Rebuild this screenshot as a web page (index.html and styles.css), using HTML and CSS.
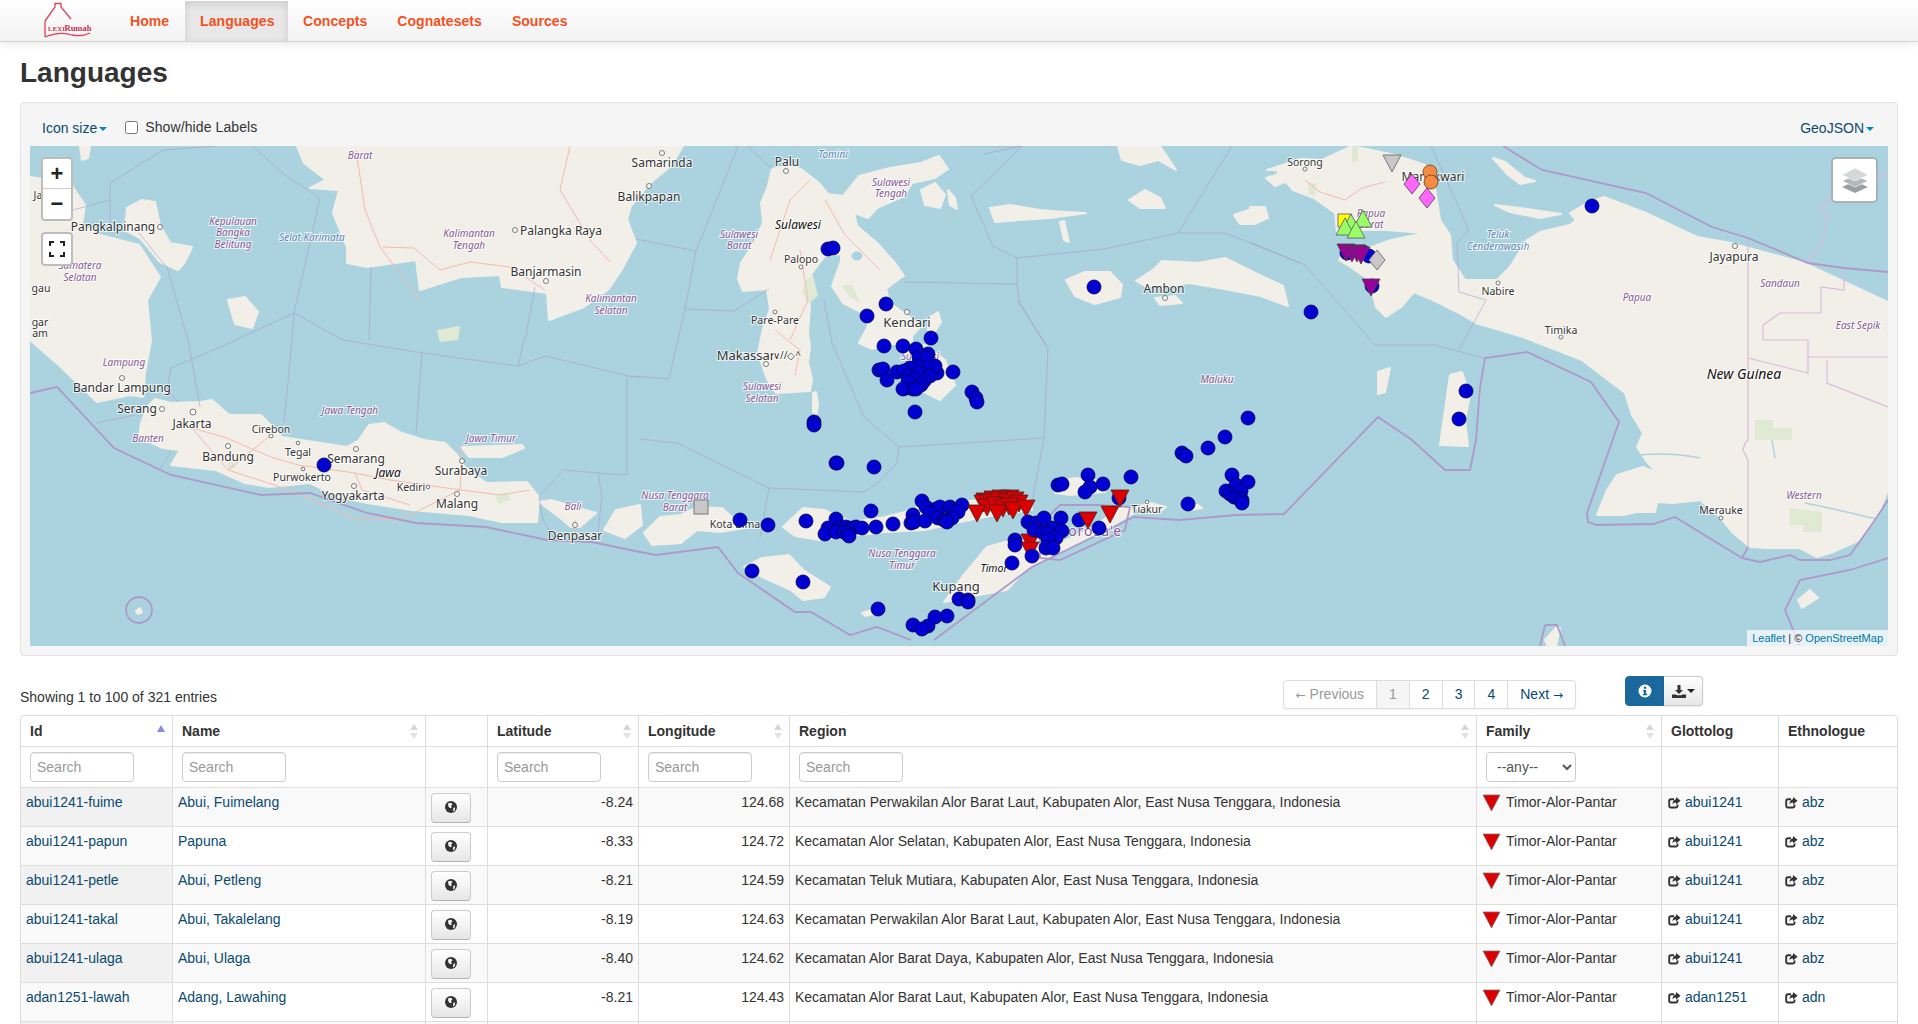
FILE: index.html

```html
<!DOCTYPE html>
<html lang="en">
<head>
  <meta charset="UTF-8" />
  <title>LexiRumah - Languages</title>
  <link rel="stylesheet" href="styles.css">
</head>
<body>
  <svg class="defs" width="0" height="0">
    <defs>
      <polygon id="tri" points="-9,-8 9,-8 0,9" />
      <polygon id="tri-up" points="-9,8 9,8 0,-9" />
      <polygon id="dia" points="0,-10 8,0 0,10 -8,0" />
      <g id="globe">
        <circle cx="6" cy="6" r="6" fill="#333" />
        <path d="M3 2.5 L6 1.8 L7.5 3.2 L6 4.8 L6.8 6.6 L5.2 7.2 L3.4 5.4 Z M8.4 6.8 L10.2 6.6 L9.6 9.4 L8 10.4 Z" fill="#fff" />
      </g>
      <g id="share">
        <path d="M9.5 8.5 V10 Q9.5 11.5 8 11.5 H3 Q1.2 11.5 1.2 9.8 V5 Q1.2 3.2 3 3.2 H6" fill="none" stroke="#333" stroke-width="1.9" />
        <path d="M8 1 L12.6 4.8 L8 8.6 V6.4 Q5.4 6.2 4.4 8.6 Q4.6 3.8 8 3.2 Z" fill="#333" />
      </g>
      <g id="sort">
        <polygon points="4,0 8,6 0,6" fill="#d6d6d6" />
        <polygon points="0,9 8,9 4,15" fill="#e2e2e2" />
      </g>
    </defs>
  </svg>

  <header class="navbar">
    <a class="brand" href="#">
      <svg width="48" height="36" viewBox="44 2 48 36">
        <path class="logo-line" d="M45 37 V21 L55 7 V3.5 H61 V7 L71 19 M45 37 Q60 31 72 35 Q82 37 90 33" />
        <text class="logo-lexi" x="48" y="31">LEXI</text>
        <text class="logo-rumah" x="64.5" y="31">Rumah</text>
      </svg>
    </a>
    <nav class="nav">
      <a href="#">Home</a>
      <a href="#" class="active">Languages</a>
      <a href="#">Concepts</a>
      <a href="#">Cognatesets</a>
      <a href="#">Sources</a>
    </nav>
  </header>

  <main class="content">
    <h2 class="page-title">Languages</h2>

    <section class="well">
      <div class="map-tools">
        <a href="#" class="tool-link">Icon size<span class="caret"></span></a>
        <label class="labels-toggle"><input type="checkbox"> Show/hide Labels</label>
        <a href="#" class="tool-link geojson">GeoJSON<span class="caret"></span></a>
      </div>

      <div class="map">
        <svg class="map-svg" width="1858" height="500" viewBox="30 146 1858 500">
          <!-- land -->
          <g class="land">
            <polygon points="30,177 70,183 85,205 82,225 100,235 139,245 160,277 147,300 151,340 145,373 143,397 130,395 97,402 61,367 30,340" />
            <polygon points="80,146 90,146 88,158 82,160" />
            <polygon points="127,208 142,200 155,202 160,225 170,243 192,247 185,262 178,270 160,262 150,250 140,238 125,230" />
            <polygon points="228,300 245,297 258,312 252,328 235,324" />
            <polygon points="297,146 304,163 326,180 310,188 339,190 333,213 347,247 347,263 367,267 416,260 420,290 461,277 500,275 502,287 547,293 549,320 584,307 609,289 622,269 636,243 627,219 631,206 649,184 671,166 683,146" />
            <polygon points="772,169 767,189 761,203 763,223 754,243 741,263 738,279 743,291 767,289 770,309 763,329 758,353 767,379 776,393 810,391 812,379 808,363 810,346 808,333 810,306 808,286 812,273 825,256 841,254 841,261 832,286 843,303 863,313 868,326 859,343 872,349 890,343 912,349 912,336 921,326 908,316 890,303 886,289 899,279 904,276 895,263 877,243 857,226 854,213 868,218 877,208 904,196 912,183 935,178 948,169 939,156 921,163 890,168 859,176 843,196 828,194 819,183 801,169 788,166" />
            <polygon points="921,190 935,183 945,195 940,208 925,205" />
            <polygon points="948,190 955,198 957,209 950,205" />
            <polygon points="929,318 938,312 941,322 934,333 928,330" />
            <polygon points="905,350 925,345 945,360 955,385 940,400 920,390" />
            <polygon points="813,393 816,392 818,405 816,415 813,412" />
            <polygon points="990,208 1010,205 1040,210 1065,212 1086,213 1050,218 1020,220 995,222" />
            <polygon points="1060,222 1064,221 1068,238 1069,242 1064,240" />
            <polygon points="1118,146 1160,146 1176,170 1158,160 1140,165 1122,160" />
            <polygon points="1129,200 1145,190 1160,198 1165,208 1140,208" />
            <polygon points="1234,215 1255,208 1266,218 1255,224 1240,224" />
            <polygon points="1266,178 1285,172 1290,180 1275,186" />
            <polygon points="1066,280 1085,272 1110,272 1122,285 1120,297 1095,304 1075,296" />
            <polygon points="1162,261 1198,263 1225,258 1247,269 1283,286 1288,306 1261,296 1225,289 1189,283 1167,286 1145,286 1136,281 1154,269" />
            <polygon points="1155,298 1175,296 1182,303 1160,305" />
            <polygon points="1250,207 1265,207 1268,218 1255,223 1250,221" />
            <polygon points="1267,170 1301,159 1322,160 1352,146 1395,155 1425,165 1433,178 1437,200 1440,220 1450,235 1452,260 1465,280 1497,280 1510,267 1527,240 1540,232 1570,225 1576,220 1570,213 1587,203 1604,197 1646,213 1697,237 1731,243 1804,263 1847,283 1888,302 1888,490 1877,517 1860,540 1833,552 1817,557 1800,548 1767,548 1750,547 1733,533 1720,517 1700,500 1673,503 1657,502 1655,512 1637,512 1623,515 1597,515 1607,490 1617,475 1643,467 1657,473 1647,462 1637,447 1643,433 1632,415 1625,393 1582,360 1523,337 1476,323 1459,313 1433,300 1414,292 1401,307 1386,317 1376,307 1369,280 1352,268 1339,260 1342,255 1369,248 1391,240 1425,233 1386,230 1361,230 1337,232 1335,213 1314,198 1293,190 1276,170" />
            <polygon points="1495,205 1520,208 1561,214 1540,218 1510,212" />
            <polygon points="1493,158 1505,162 1525,178 1535,181 1520,184 1508,175" />
            <polygon points="1378,372 1390,368 1385,392 1378,394" />
            <polygon points="1440,445 1450,375 1462,372 1470,395 1465,420 1468,446" />
            <polygon points="141,423 147,407 155,399 171,403 200,402 212,400 229,415 261,415 282,437 314,442 347,447 359,440 369,425 384,423 402,433 424,440 445,443 457,455 465,467 486,483 527,482 539,497 537,522 502,522 469,515 412,510 367,503 339,497 310,483 269,487 245,483 216,470 171,465 180,450 163,448 139,437" />
            <polygon points="461,447 522,445 524,448 502,457 469,457" />
            <polygon points="539,502 551,500 596,513 580,527 571,527 559,517" />
            <polygon points="604,530 616,510 640,505 642,525 625,538" />
            <polygon points="644,533 660,517 681,515 697,507 722,508 735,520 745,528 720,532 697,530 681,543 652,545" />
            <polygon points="783,527 803,508 824,510 852,522 885,517 905,512 925,505 960,502 1000,498 1030,500 1032,510 1000,514 960,522 925,530 885,532 852,536 820,540 795,536" />
            <polygon points="1055,482 1075,478 1110,482 1105,492 1070,495 1055,493" />
            <polygon points="944,602 962,577 987,547 1024,537 1060,543 1089,530 1121,507 1130,507 1134,513 1117,523 1085,540 1048,557 1028,567 1007,590 979,595" />
            <polygon points="1136,507 1150,503 1166,507 1158,513 1140,512" />
            <polygon points="1186,505 1198,505 1202,508 1190,510" />
            <polygon points="744,567 762,558 789,555 803,570 830,587 824,597 803,600 791,590 762,577" />
            <polygon points="862,613 878,608 880,612 866,616" />
            <polygon points="136,611 140,608 142,612 138,614" />
            <polygon points="1545,640 1556,628 1560,628 1556,646 1548,646" />
            <polygon points="1798,600 1810,590 1818,598 1802,608" />
            <polygon points="1800,530 1808,528 1810,536 1802,538" />
          </g>

          <!-- national parks -->
          <g class="park">
            <polygon points="437,330 460,326 458,340 440,342" />
            <polygon points="806,280 813,275 818,296 808,304 802,292" />
            <polygon points="842,285 852,285 860,302 850,298" />
            <polygon points="1352,146 1358,146 1358,162 1352,162" />
            <polygon points="1308,182 1316,184 1315,196 1308,194" />
            <polygon points="1755,420 1773,420 1773,428 1792,428 1792,440 1755,440" />
            <polygon points="1790,508 1822,512 1822,532 1803,532 1803,525 1790,525" />
            <polygon points="227,462 233,460 236,468 229,469" />
            <polygon points="495,495 508,492 510,500 498,504" />
          </g>

          <!-- rivers and lakes -->
          <g class="water">
            <ellipse cx="857" cy="256" rx="5" ry="4" />
            <ellipse cx="820" cy="330" rx="2" ry="6" />
            <path d="M1640 455 Q1670 452 1700 458 M1805 503 Q1840 510 1880 520 M1772 440 L1775 458" />
          </g>

          <!-- roads and boundaries -->
          <g class="roads">
            <path d="M192 428 L224 437 L271 457 L298 465 L355 473 L362 490 L410 505 M192 428 L228 470 L290 490 L353 518 L400 520 L460 490 L461 470 M355 473 L390 480 L461 490 L500 495 L530 490 M228 470 L271 435 M461 470 L461 445 M575 520 L575 535" />
            <path d="M356 150 L365 210 L380 247 L420 300 M383 247 L414 248 L440 270 L470 262 L510 267 L545 290 M570 146 L560 190 L590 240 L610 262 M770 260 L790 200 L810 180 M800 250 L808 300 L790 340 M825 200 L845 235 L880 270 M775 330 L800 350 L795 375" />
            <path d="M1305 180 L1320 192 L1345 200 L1362 188 L1385 182" />
          </g>
          <g class="bd-thin">
            <path d="M253 146 L282 173 L320 198 L294 313 L343 340 M163 150 L216 146 M163 150 L110 183 L110 227 M110 200 L73 210 M294 313 L235 340 M294 313 L292 340 M188 340 L167 267 L163 263 L139 233 M371 267 L369 340 M535 287 L525 340" />
            <path d="M343 340 L422 353 L518 366 L545 356 L633 377 L640 377 M422 353 L416 433 M518 366 L524 340 M237 340 L171 368 L167 390 L178 402 M188 340 L200 407 M292 340 L284 423 M171 452 L159 470 M96 423 L135 415 M627 377 L627 475 L598 473 L563 470 L539 497 L543 520 L555 540 M598 473 L602 497 L598 532" />
            <path d="M640 439 L677 443 L769 488 L864 492 L879 482 L897 463 L899 447 L864 417 L832 343 L824 300 M899 447 L1044 438 L1048 347 L1017 300 M769 488 L760 538 M1044 438 L1030 513" />
            <path d="M738 146 L696 251 L685 309 L669 379 L633 376 M772 169 L747 146 M696 251 L636 239 M685 309 L734 311 L769 289 M904 282 L1017 284 L1017 258 L993 246 L971 196 L1022 146 M984 154 L1022 146 L960 146 M1232 146 L1178 233 L1225 233 L1300 263 M1017 258 L1104 249 L1178 233 M1017 284 L1020 303 L1046 346" />
            <path d="M1431 146 L1469 230 L1457 243 M1250 242 L1305 265 L1375 345 L1435 345 L1484 358 M1459 350 L1486 300 L1459 292 L1457 243" />
          </g>
          <g class="bd-png">
            <path d="M1808 263 L1823 240 L1827 217 L1821 207 L1830 198 L1888 173" />
            <path d="M1844 268 L1844 290 L1821 287 L1821 313 L1780 313 L1763 325 L1763 340 L1808 340 L1808 373 L1748 358 M1808 357 L1888 357 M1827 360 L1827 383 L1888 407" />
            <path d="M1748 238 L1748 440 L1745 443 L1743 450 L1748 460 L1748 547" />
          </g>
          <g class="bd-thick">
            <path d="M30 393 L57 387 L114 448 L171 475 L261 495 L310 493 L367 513 L416 523 L486 527 L547 540 L592 542 L640 552 L656 555 L718 547 L738 573 L795 612 L811 612 L850 635 L877 627 L911 640" />
            <path d="M934 640 L1032 567 L1134 517 L1179 520 L1236 515 L1284 514 L1378 417 L1412 440 L1445 470 L1470 470 L1476 440 L1480 387 L1485 358 L1527 352 L1591 382 L1619 422 L1587 513 L1588 522 L1597 525 L1653 524 L1675 517 L1742 558 L1748 547" />
            <path d="M1503 146 L1542 170 L1646 193 L1712 227 L1748 238 L1808 263 L1844 268 L1888 272" />
            <path d="M1742 558 L1760 562 L1790 555 L1800 560 L1830 560 L1850 555 L1875 520 L1888 500" />
            <path d="M1800 646 L1785 610 L1800 580 L1850 570 L1888 558 M1545 625 L1557 625 L1565 646 M1540 646 L1545 625" />
            <ellipse cx="139" cy="610" rx="13" ry="13" />
            <path d="M1040 525 L1060 505 L1100 505 L1130 507 L1125 530 L1060 560 L1040 558 Z" />
          </g>

          <!-- city dots -->
          <g class="city-dot">
            <circle cx="160" cy="227" r="2.5" /><circle cx="515" cy="230" r="2.5" /><circle cx="546" cy="281" r="2.5" />
            <circle cx="662" cy="153" r="2.5" /><circle cx="649" cy="186" r="2.5" /><circle cx="786" cy="171" r="2.5" />
            <circle cx="801" cy="267" r="2" /><circle cx="775" cy="312" r="2" /><circle cx="907" cy="312" r="2.5" />
            <circle cx="766" cy="364" r="2.5" /><circle cx="1165" cy="298" r="2.5" /><circle cx="1305" cy="169" r="2" />
            <circle cx="1498" cy="283" r="2" /><circle cx="1735" cy="246" r="2.5" /><circle cx="1561" cy="337" r="2" />
            <circle cx="1721" cy="518" r="2" /><circle cx="122" cy="378" r="2.5" /><circle cx="162" cy="409" r="2.5" />
            <circle cx="193" cy="412" r="3" /><circle cx="228" cy="446" r="2.5" /><circle cx="271" cy="436" r="2" />
            <circle cx="298" cy="443" r="1.8" /><circle cx="356" cy="449" r="2.5" /><circle cx="303" cy="469" r="1.8" />
            <circle cx="354" cy="486" r="2.5" /><circle cx="428" cy="487" r="1.8" /><circle cx="462" cy="461" r="2.5" />
            <circle cx="457" cy="494" r="2.5" /><circle cx="575" cy="525" r="2.5" /><circle cx="1147" cy="502" r="1.8" />
          </g>

          <!-- place names -->
          <g class="city">
            <text x="113" y="231">Pangkalpinang</text><text x="561" y="235">Palangka Raya</text><text x="546" y="276">Banjarmasin</text>
            <text x="662" y="167">Samarinda</text><text x="649" y="201">Balikpapan</text><text x="787" y="166">Palu</text>
            <text x="746" y="360" class="big">Makassar</text><text x="907" y="327" class="big">Kendari</text>
            <text x="122" y="392">Bandar Lampung</text><text x="137" y="413">Serang</text><text x="192" y="428">Jakarta</text>
            <text x="228" y="461">Bandung</text><text x="356" y="463">Semarang</text><text x="461" y="475">Surabaya</text>
            <text x="353" y="500">Yogyakarta</text><text x="457" y="508">Malang</text><text x="575" y="540">Denpasar</text>
            <text x="1164" y="293">Ambon</text><text x="1734" y="261">Jayapura</text><text x="956" y="591" class="big">Kupang</text>
            <text x="1433" y="181">Manokwari</text>
            <text x="271" y="433" class="small">Cirebon</text><text x="298" y="456" class="small">Tegal</text><text x="302" y="481" class="small">Purwokerto</text>
            <text x="411" y="491" class="small">Kediri</text><text x="801" y="263" class="small">Palopo</text><text x="775" y="324" class="small">Pare-Pare</text>
            <text x="1305" y="166" class="small">Sorong</text><text x="1498" y="295" class="small">Nabire</text><text x="1561" y="334" class="small">Timika</text>
            <text x="1721" y="514" class="small">Merauke</text><text x="1147" y="513" class="small">Tiakur</text><text x="735" y="528" class="small">Kota Bima</text>
            <text x="38" y="199" class="small">Ja</text><text x="41" y="292" class="small">gau</text>
            <text x="40" y="326" class="small">gar</text><text x="40" y="337" class="small">am</text>
            <text x="787" y="359" class="script">∨//◇^</text>
          </g>
          <g class="state">
            <text x="360" y="159">Barat</text><text x="233" y="225">Kepulauan</text><text x="233" y="236">Bangka</text><text x="233" y="248">Belitung</text>
            <text x="469" y="237">Kalimantan</text><text x="469" y="249">Tengah</text><text x="80" y="269">Sumatera</text><text x="80" y="281">Selatan</text>
            <text x="611" y="302">Kalimantan</text><text x="611" y="314">Selatan</text><text x="124" y="366">Lampung</text><text x="148" y="442">Banten</text>
            <text x="350" y="414">Jawa Tengah</text><text x="491" y="442">Jawa Timur</text><text x="573" y="510">Bali</text>
            <text x="891" y="186">Sulawesi</text><text x="891" y="197">Tengah</text><text x="739" y="238">Sulawesi</text><text x="739" y="249">Barat</text>
            <text x="762" y="390">Sulawesi</text><text x="762" y="402">Selatan</text><text x="920" y="360">Sulawesi</text>
            <text x="1217" y="383">Maluku</text><text x="1371" y="217">Papua</text><text x="1371" y="228">Barat</text>
            <text x="675" y="499">Nusa Tenggara</text><text x="675" y="511">Barat</text><text x="902" y="557">Nusa Tenggara</text><text x="902" y="569">Timur</text>
            <text x="1780" y="287">Sandaun</text><text x="1637" y="301">Papua</text><text x="1858" y="329">East Sepik</text><text x="1804" y="499">Western</text>
            <text x="1091" y="536" class="country">Lorosa'e</text>
          </g>
          <g class="sea">
            <text x="312" y="241">Selat Karimata</text><text x="833" y="158">Tomini</text>
            <text x="1498" y="238">Teluk</text><text x="1498" y="250">Cenderawasih</text>
          </g>
          <g class="island">
            <text x="798" y="229">Sulawesi</text><text x="388" y="477">Jawa</text><text x="994" y="572" class="small">Timor</text>
            <text x="1744" y="379" class="big">New Guinea</text>
          </g>

          <!-- language markers -->
          <g class="m-blue">
            <circle cx="828" cy="249" /><circle cx="833" cy="248" /><circle cx="886" cy="304" /><circle cx="867" cy="316" />
            <circle cx="931" cy="338" /><circle cx="884" cy="346" /><circle cx="903" cy="346" /><circle cx="916" cy="349" />
            <circle cx="928" cy="354" /><circle cx="919" cy="357" /><circle cx="927" cy="358" /><circle cx="879" cy="370" />
            <circle cx="883" cy="369" /><circle cx="897" cy="372" /><circle cx="887" cy="380" /><circle cx="953" cy="372" />
            <circle cx="937" cy="373" /><circle cx="935" cy="366" /><circle cx="926" cy="368" /><circle cx="917" cy="366" />
            <circle cx="910" cy="368" /><circle cx="904" cy="371" /><circle cx="908" cy="376" /><circle cx="919" cy="373" />
            <circle cx="930" cy="376" /><circle cx="924" cy="381" /><circle cx="915" cy="379" /><circle cx="906" cy="388" />
            <circle cx="921" cy="385" /><circle cx="908" cy="382" /><circle cx="903" cy="389" /><circle cx="913" cy="389" />
            <circle cx="916" cy="389" /><circle cx="972" cy="392" /><circle cx="976" cy="398" /><circle cx="977" cy="402" />
            <circle cx="1094" cy="287" /><circle cx="915" cy="412" /><circle cx="814" cy="422" /><circle cx="814" cy="425" />
            <circle cx="836" cy="463" /><circle cx="837" cy="463" /><circle cx="874" cy="467" /><circle cx="740" cy="520" />
            <circle cx="768" cy="525" /><circle cx="806" cy="521" /><circle cx="871" cy="511" /><circle cx="836" cy="519" />
            <circle cx="828" cy="528" /><circle cx="825" cy="534" /><circle cx="840" cy="527" /><circle cx="836" cy="532" />
            <circle cx="846" cy="527" /><circle cx="852" cy="528" /><circle cx="856" cy="527" /><circle cx="862" cy="528" />
            <circle cx="844" cy="532" /><circle cx="848" cy="533" /><circle cx="849" cy="536" /><circle cx="876" cy="527" />
            <circle cx="893" cy="524" /><circle cx="922" cy="501" /><circle cx="926" cy="507" /><circle cx="936" cy="509" />
            <circle cx="940" cy="507" /><circle cx="950" cy="507" /><circle cx="954" cy="510" /><circle cx="962" cy="505" />
            <circle cx="958" cy="512" /><circle cx="930" cy="513" /><circle cx="913" cy="515" /><circle cx="911" cy="523" />
            <circle cx="914" cy="522" /><circle cx="925" cy="521" /><circle cx="938" cy="518" /><circle cx="944" cy="520" />
            <circle cx="952" cy="518" /><circle cx="946" cy="520" /><circle cx="947" cy="522" />
            <circle cx="1058" cy="485" /><circle cx="1062" cy="484" /><circle cx="1088" cy="475" /><circle cx="1090" cy="487" />
            <circle cx="1103" cy="484" /><circle cx="1085" cy="492" /><circle cx="1131" cy="477" /><circle cx="1119" cy="498" />
            <circle cx="1079" cy="520" /><circle cx="1188" cy="504" /><circle cx="1182" cy="453" /><circle cx="1186" cy="456" />
            <circle cx="1208" cy="448" /><circle cx="1225" cy="437" /><circle cx="1248" cy="418" /><circle cx="1232" cy="475" />
            <circle cx="1248" cy="482" /><circle cx="1236" cy="485" /><circle cx="1241" cy="491" /><circle cx="1226" cy="491" />
            <circle cx="1230" cy="494" /><circle cx="1234" cy="497" /><circle cx="1238" cy="498" /><circle cx="1242" cy="500" />
            <circle cx="1242" cy="503" /><circle cx="752" cy="571" /><circle cx="803" cy="582" /><circle cx="878" cy="609" />
            <circle cx="959" cy="599" /><circle cx="968" cy="600" /><circle cx="968" cy="602" /><circle cx="947" cy="616" />
            <circle cx="935" cy="617" /><circle cx="928" cy="626" /><circle cx="913" cy="625" /><circle cx="922" cy="629" />
            <circle cx="324" cy="465" /><circle cx="1592" cy="206" /><circle cx="1311" cy="312" /><circle cx="1466" cy="391" />
            <circle cx="1459" cy="419" /><circle cx="1347" cy="253" /><circle cx="1363" cy="252" /><circle cx="1369" cy="256" />
            <circle cx="1372" cy="286" />
          </g>
          <g class="m-red">
            <use href="#tri" x="985" y="501" /><use href="#tri" x="993" y="499" /><use href="#tri" x="1001" y="498" />
            <use href="#tri" x="1010" y="498" /><use href="#tri" x="1004" y="501" /><use href="#tri" x="996" y="503" />
            <use href="#tri" x="983" y="503" /><use href="#tri" x="991" y="502" /><use href="#tri" x="999" y="500" />
            <use href="#tri" x="1007" y="502" /><use href="#tri" x="1015" y="500" /><use href="#tri" x="1019" y="503" />
            <use href="#tri" x="987" y="507" /><use href="#tri" x="995" y="505" /><use href="#tri" x="1003" y="508" />
            <use href="#tri" x="1009" y="506" /><use href="#tri" x="977" y="513" /><use href="#tri" x="997" y="513" />
            <use href="#tri" x="1013" y="510" /><use href="#tri" x="1026" y="508" /><use href="#tri" x="1120" y="498" />
            <use href="#tri" x="1110" y="514" /><use href="#tri" x="1088" y="520" /><use href="#tri" x="1030" y="542" />
            <use href="#tri" x="1030" y="550" />
          </g>
          <g class="m-blue">
            <circle cx="1028" cy="522" /><circle cx="1036" cy="523" /><circle cx="1044" cy="518" /><circle cx="1052" cy="528" />
            <circle cx="1062" cy="531" /><circle cx="1061" cy="518" /><circle cx="1034" cy="530" /><circle cx="1042" cy="532" />
            <circle cx="1048" cy="533" /><circle cx="1056" cy="538" /><circle cx="1048" cy="540" /><circle cx="1046" cy="548" />
            <circle cx="1053" cy="548" /><circle cx="1015" cy="540" /><circle cx="1015" cy="545" /><circle cx="1032" cy="556" />
            <circle cx="1012" cy="563" /><circle cx="1099" cy="528" />
          </g>
          <g class="m-purple">
            <use href="#tri" x="1346" y="252" /><use href="#tri" x="1352" y="253" /><use href="#tri" x="1357" y="253" />
            <use href="#tri" x="1361" y="255" /><use href="#tri" x="1371" y="287" />
          </g>
          <rect class="m-grey" x="694" y="500" width="14" height="14" />
          <use class="m-grey" href="#tri" x="1392" y="163" />
          <use class="m-grey" href="#dia" x="1377" y="260" />
          <g class="m-orange"><circle cx="1430" cy="172" /><circle cx="1431" cy="182" /></g>
          <g class="m-pink"><use href="#dia" x="1412" y="184" /><use href="#dia" x="1427" y="198" /></g>
          <rect class="m-yellow" x="1338" y="214" width="13" height="13" />
          <g class="m-green">
            <use href="#tri-up" x="1363" y="219" /><use href="#tri-up" x="1351" y="223" />
            <use href="#tri-up" x="1345" y="227" /><use href="#tri-up" x="1356" y="230" />
          </g>
        </svg>

        <div class="leaflet-bar zoom-ctl">
          <a href="#" class="zoom-in">+</a>
          <a href="#">&minus;</a>
        </div>
        <div class="leaflet-bar fs-ctl">
          <a href="#">
            <svg width="16" height="16" viewBox="0 0 16 16"><path d="M1 5 V1 H5 M11 1 H15 V5 M15 11 V15 H11 M5 15 H1 V11" fill="none" stroke="#222" stroke-width="2" /></svg>
          </a>
        </div>
        <div class="layers-ctl">
          <svg width="26" height="26" viewBox="0 0 26 26">
            <polygon points="13,14 26,20 13,26 0,20" fill="#9aa0a0" />
            <polygon points="13,8 26,14 13,20 0,14" fill="#b4b8b8" stroke="#fff" stroke-width=".6" />
            <polygon points="13,1 26,8 13,14 0,8" fill="#d5d8d8" stroke="#fff" stroke-width=".6" />
          </svg>
        </div>
        <div class="attribution"><a href="#">Leaflet</a> | &copy; <a href="#">OpenStreetMap</a></div>
      </div>
    </section>

    <div class="table-top">
      <div class="table-info">Showing 1 to 100 of 321 entries</div>
      <ul class="pager">
        <li class="off"><a href="#"><span class="arr">&larr;</span> Previous</a></li>
        <li class="current"><a href="#">1</a></li>
        <li><a href="#">2</a></li>
        <li><a href="#">3</a></li>
        <li><a href="#">4</a></li>
        <li><a href="#">Next <span class="arr">&rarr;</span></a></li>
      </ul>
      <div class="btn-group">
        <button class="btn-info" type="button">
          <svg width="14" height="14" viewBox="0 0 14 14"><circle cx="7" cy="7" r="6.5" fill="#fff" /><rect x="5.8" y="2.6" width="2.4" height="2.2" fill="#1a689c" /><path d="M4.9 6 H8.1 V9.8 H9.2 V11.2 H4.9 V9.8 H6 V7.4 H4.9 Z" fill="#1a689c" /></svg>
        </button>
        <button class="btn-dl" type="button">
          <svg width="14" height="13" viewBox="0 0 14 13"><path d="M5.5 0 H8.5 V5 H11 L7 9 L3 5 H5.5 Z M0 9.5 H3.4 L5.2 10.2 H8.8 L10.6 9.5 H14 V13 H0 Z" fill="#333" /></svg>
          <span class="caret dark"></span>
        </button>
      </div>
    </div>

    <table class="data-table">
      <colgroup>
        <col class="c-id"><col class="c-name"><col class="c-map"><col class="c-lat"><col class="c-lon">
        <col class="c-region"><col class="c-family"><col class="c-glotto"><col class="c-ethno">
      </colgroup>
      <thead>
        <tr class="head-row">
          <th><div class="th-in">Id<span class="sort-up"></span></div></th>
          <th><div class="th-in">Name<svg class="sort" width="8" height="15"><use href="#sort" /></svg></div></th>
          <th></th>
          <th><div class="th-in">Latitude<svg class="sort" width="8" height="15"><use href="#sort" /></svg></div></th>
          <th><div class="th-in">Longitude<svg class="sort" width="8" height="15"><use href="#sort" /></svg></div></th>
          <th><div class="th-in">Region<svg class="sort" width="8" height="15"><use href="#sort" /></svg></div></th>
          <th><div class="th-in">Family<svg class="sort" width="8" height="15"><use href="#sort" /></svg></div></th>
          <th><div class="th-in">Glottolog</div></th>
          <th><div class="th-in">Ethnologue</div></th>
        </tr>
        <tr class="filter-row">
          <th><input type="text" placeholder="Search"></th>
          <th><input type="text" placeholder="Search"></th>
          <th></th>
          <th><input type="text" placeholder="Search"></th>
          <th><input type="text" placeholder="Search"></th>
          <th><input type="text" placeholder="Search"></th>
          <th><select><option>--any--</option></select></th>
          <th></th>
          <th></th>
        </tr>
      </thead>
      <tbody>
        <tr>
          <td class="sorted"><a href="#">abui1241-fuime</a></td><td><a href="#">Abui, Fuimelang</a></td>
          <td><button class="btn-globe" type="button"><svg width="12" height="12"><use href="#globe" /></svg></button></td>
          <td class="num">-8.24</td><td class="num">124.68</td>
          <td>Kecamatan Perwakilan Alor Barat Laut, Kabupaten Alor, East Nusa Tenggara, Indonesia</td>
          <td><div class="fam"><svg width="19" height="18" viewBox="0 0 19 18"><polygon class="fam-tri" points="1,1 18,1 9.5,17" /></svg>Timor-Alor-Pantar</div></td>
          <td><svg class="ext" width="13" height="13"><use href="#share" /></svg><a href="#">abui1241</a></td>
          <td><svg class="ext" width="13" height="13"><use href="#share" /></svg><a href="#">abz</a></td>
        </tr>
        <tr>
          <td class="sorted"><a href="#">abui1241-papun</a></td><td><a href="#">Papuna</a></td>
          <td><button class="btn-globe" type="button"><svg width="12" height="12"><use href="#globe" /></svg></button></td>
          <td class="num">-8.33</td><td class="num">124.72</td>
          <td>Kecamatan Alor Selatan, Kabupaten Alor, East Nusa Tenggara, Indonesia</td>
          <td><div class="fam"><svg width="19" height="18" viewBox="0 0 19 18"><polygon class="fam-tri" points="1,1 18,1 9.5,17" /></svg>Timor-Alor-Pantar</div></td>
          <td><svg class="ext" width="13" height="13"><use href="#share" /></svg><a href="#">abui1241</a></td>
          <td><svg class="ext" width="13" height="13"><use href="#share" /></svg><a href="#">abz</a></td>
        </tr>
        <tr>
          <td class="sorted"><a href="#">abui1241-petle</a></td><td><a href="#">Abui, Petleng</a></td>
          <td><button class="btn-globe" type="button"><svg width="12" height="12"><use href="#globe" /></svg></button></td>
          <td class="num">-8.21</td><td class="num">124.59</td>
          <td>Kecamatan Teluk Mutiara, Kabupaten Alor, East Nusa Tenggara, Indonesia</td>
          <td><div class="fam"><svg width="19" height="18" viewBox="0 0 19 18"><polygon class="fam-tri" points="1,1 18,1 9.5,17" /></svg>Timor-Alor-Pantar</div></td>
          <td><svg class="ext" width="13" height="13"><use href="#share" /></svg><a href="#">abui1241</a></td>
          <td><svg class="ext" width="13" height="13"><use href="#share" /></svg><a href="#">abz</a></td>
        </tr>
        <tr>
          <td class="sorted"><a href="#">abui1241-takal</a></td><td><a href="#">Abui, Takalelang</a></td>
          <td><button class="btn-globe" type="button"><svg width="12" height="12"><use href="#globe" /></svg></button></td>
          <td class="num">-8.19</td><td class="num">124.63</td>
          <td>Kecamatan Perwakilan Alor Barat Laut, Kabupaten Alor, East Nusa Tenggara, Indonesia</td>
          <td><div class="fam"><svg width="19" height="18" viewBox="0 0 19 18"><polygon class="fam-tri" points="1,1 18,1 9.5,17" /></svg>Timor-Alor-Pantar</div></td>
          <td><svg class="ext" width="13" height="13"><use href="#share" /></svg><a href="#">abui1241</a></td>
          <td><svg class="ext" width="13" height="13"><use href="#share" /></svg><a href="#">abz</a></td>
        </tr>
        <tr>
          <td class="sorted"><a href="#">abui1241-ulaga</a></td><td><a href="#">Abui, Ulaga</a></td>
          <td><button class="btn-globe" type="button"><svg width="12" height="12"><use href="#globe" /></svg></button></td>
          <td class="num">-8.40</td><td class="num">124.62</td>
          <td>Kecamatan Alor Barat Daya, Kabupaten Alor, East Nusa Tenggara, Indonesia</td>
          <td><div class="fam"><svg width="19" height="18" viewBox="0 0 19 18"><polygon class="fam-tri" points="1,1 18,1 9.5,17" /></svg>Timor-Alor-Pantar</div></td>
          <td><svg class="ext" width="13" height="13"><use href="#share" /></svg><a href="#">abui1241</a></td>
          <td><svg class="ext" width="13" height="13"><use href="#share" /></svg><a href="#">abz</a></td>
        </tr>
        <tr>
          <td class="sorted"><a href="#">adan1251-lawah</a></td><td><a href="#">Adang, Lawahing</a></td>
          <td><button class="btn-globe" type="button"><svg width="12" height="12"><use href="#globe" /></svg></button></td>
          <td class="num">-8.21</td><td class="num">124.43</td>
          <td>Kecamatan Alor Barat Laut, Kabupaten Alor, East Nusa Tenggara, Indonesia</td>
          <td><div class="fam"><svg width="19" height="18" viewBox="0 0 19 18"><polygon class="fam-tri" points="1,1 18,1 9.5,17" /></svg>Timor-Alor-Pantar</div></td>
          <td><svg class="ext" width="13" height="13"><use href="#share" /></svg><a href="#">adan1251</a></td>
          <td><svg class="ext" width="13" height="13"><use href="#share" /></svg><a href="#">adn</a></td>
        </tr>
        <tr>
          <td class="sorted"></td><td></td><td></td><td></td><td></td><td></td><td></td><td></td><td></td>
        </tr>
      </tbody>
    </table>
  </main>
</body>
</html>
```

FILE: styles.css

```css
:root {
  --link: #0a4a70;
  --line: #ddd;
  --nav-orange: #f4511e;
}

* {
  box-sizing: border-box;
}

html, body {
  height: 1024px;
  overflow: hidden;
}

body {
  margin: 0;
  background: #fff;
  font-family: "Liberation Sans", Arial, sans-serif;
  font-size: 14px;
  line-height: 20px;
  color: #333;
}

a {
  color: var(--link);
  text-decoration: none;
}

.defs {
  display: block;
  height: 0;
}

/* top bar */
.navbar {
  display: flex;
  height: 42px;
  padding-left: 44px;
  background: linear-gradient(#fff, #f2f2f2);
  border-bottom: 1px solid #d4d4d4;
  box-shadow: 0 1px 10px rgba(0, 0, 0, 0.1);
}

.brand {
  width: 71px;
  padding-top: 2px;
}

.logo-line {
  fill: none;
  stroke: #d9415e;
  stroke-width: 1.3;
}

.logo-lexi {
  font: bold 6.5px "Liberation Serif", serif;
  fill: #c2334d;
  letter-spacing: 0.3px;
}

.logo-rumah {
  font: bold 8.5px "Liberation Serif", serif;
  fill: #c2334d;
}

.nav {
  display: flex;
}

.nav a {
  padding: 11px 15px 0;
  margin-right: 0;
  font-weight: bold;
  letter-spacing: 0.05px;
  color: var(--nav-orange);
}

.nav a.active {
  width: 103px;
  margin: 1px 0 0 1px;
  padding-top: 10px;
  background: #e8e8e8;
  box-shadow: inset 0 3px 8px rgba(0, 0, 0, 0.12);
}

/* page */
.content {
  padding: 0 20px;
}

.page-title {
  margin: 11px 0 9px;
  font-size: 28px;
  line-height: 40px;
  font-weight: bold;
  color: #333;
}

.well {
  height: 554px;
  padding: 0 9px;
  background: #f5f5f5;
  border: 1px solid #e3e3e3;
  border-radius: 4px;
}

.map-tools {
  display: flex;
  height: 43px;
  padding: 13px 14px 0 12px;
}

.tool-link {
  padding-top: 2px;
}

.geojson {
  margin-left: auto;
}

.caret {
  display: inline-block;
  margin-left: 2px;
  vertical-align: middle;
  border-top: 4px solid #0088cc;
  border-left: 4px solid transparent;
  border-right: 4px solid transparent;
}

.caret.dark {
  margin-left: 1px;
  border-top-color: #222;
}

.labels-toggle {
  display: flex;
  align-items: center;
  height: 20px;
  margin: 1px 0 0 18px;
  letter-spacing: 0.1px;
}

.labels-toggle input {
  width: 13px;
  height: 13px;
  margin: 0 7px 0 0;
}

/* map */
.map {
  position: relative;
  width: 1858px;
  height: 500px;
  overflow: hidden;
  background: #aad3df;
}

.map-svg {
  display: block;
}

.land {
  fill: #f2efe9;
  stroke: #f2efe9;
  stroke-width: 2;
  stroke-linejoin: round;
}

.park {
  fill: #dfe9d4;
}

.water {
  fill: #aad3df;
  stroke: #aad3df;
}

.water path {
  fill: none;
  stroke-width: 1.5;
}

.roads path {
  fill: none;
  stroke: #f6b9ae;
  stroke-width: 1;
}

.bd-thin path {
  fill: none;
  stroke: #a99cc9;
  stroke-width: 1;
  opacity: 0.6;
}

.bd-png path {
  fill: none;
  stroke: #dbb8dc;
  stroke-width: 1.2;
}

.bd-thick path,
.bd-thick ellipse {
  fill: none;
  stroke: #ae99c9;
  stroke-width: 1.8;
}

.city-dot circle {
  fill: #fff;
  stroke: #777;
  stroke-width: 1;
}

.city text,
.state text,
.sea text,
.island text {
  font-family: "Noto Sans", sans-serif;
  text-anchor: middle;
  paint-order: stroke;
  stroke: rgba(255, 255, 255, 0.75);
  stroke-width: 2px;
}

.city text {
  font-size: 12px;
  fill: #333;
}

.city text.big {
  font-size: 13px;
}

.city text.small {
  font-size: 10.5px;
}

.city text.script {
  font-size: 10px;
}

.state text {
  font-size: 10px;
  font-style: italic;
  fill: #8a5a96;
}

.state text.country {
  font-size: 14px;
  font-style: normal;
  letter-spacing: 1px;
}

.sea text {
  font-size: 10px;
  font-style: italic;
  fill: #5f84b8;
}

.island text {
  font-size: 12px;
  font-style: italic;
  fill: #111;
}

.island text.small {
  font-size: 10.5px;
}

.island text.big {
  font-size: 14px;
}

.m-blue circle {
  r: 7px;
  fill: #0000d2;
  stroke: #000050;
  stroke-width: 0.8;
}

.m-red use {
  fill: #dd0000;
  stroke: #4a2020;
  stroke-width: 0.8;
}

.m-purple use {
  fill: #990099;
  stroke: #444;
  stroke-width: 0.8;
}

.m-grey {
  fill: #c8c8c8;
  stroke: #777;
  stroke-width: 1;
}

.m-orange circle {
  r: 7px;
  fill: #f58a42;
  stroke: #6b3a14;
  stroke-width: 0.8;
}

.m-pink use {
  fill: #ff66ff;
  stroke: #444;
  stroke-width: 0.8;
}

.m-yellow {
  fill: #ffff00;
  stroke: #777;
  stroke-width: 1;
}

.m-green use {
  fill: #99ff66;
  stroke: #556;
  stroke-width: 0.8;
}

/* leaflet controls lie over the map */
.leaflet-bar {
  position: absolute;
  left: 11px;
  width: 32px;
  background: #fff;
  border-radius: 4px;
  border: 2px solid #bdbdb9;
}

.leaflet-bar a {
  display: flex;
  align-items: center;
  justify-content: center;
  height: 30px;
  font: bold 22px "Liberation Sans", sans-serif;
  color: #222;
}

.zoom-ctl {
  top: 11px;
}

.zoom-ctl .zoom-in {
  border-bottom: 1px solid #ccc;
}

.fs-ctl {
  top: 86px;
}

.layers-ctl {
  position: absolute;
  top: 11px;
  right: 10px;
  display: flex;
  align-items: center;
  justify-content: center;
  width: 47px;
  height: 46px;
  background: #fff;
  border: 2px solid #a8b4b4;
  border-radius: 5px;
}

.attribution {
  position: absolute;
  right: 0;
  bottom: 0;
  padding: 0 5px;
  height: 16px;
  font-size: 11px;
  line-height: 16px;
  background: rgba(255, 255, 255, 0.7);
}

.attribution a {
  color: #0078a8;
}

/* above the table */
.table-top {
  display: flex;
  align-items: flex-start;
  height: 59px;
  padding-top: 20px;
}

.table-info {
  margin-top: 11px;
}

.pager {
  display: flex;
  height: 29px;
  margin: 4px 0 0 auto;
  padding: 0;
  list-style: none;
  background: #fff;
  border: 1px solid var(--line);
  border-radius: 4px;
  box-shadow: 0 1px 2px rgba(0, 0, 0, 0.05);
}

.pager li + li {
  border-left: 1px solid var(--line);
}

.pager a {
  display: block;
  padding: 0 12px;
  line-height: 27px;
}

.pager .arr {
  font-family: "DejaVu Sans", sans-serif;
  font-size: 12px;
}

.pager .off a {
  color: #999;
}

.pager .current {
  background: #f5f5f5;
}

.pager .current a {
  color: #999;
}

.btn-group {
  display: flex;
  height: 30px;
  margin: 0 195px 0 49px;
}

.btn-group button {
  display: flex;
  align-items: center;
  justify-content: center;
  width: 39px;
  padding: 0;
  border: 1px solid #ccc;
  cursor: pointer;
}

.btn-info {
  background: #1a689c;
  border-color: #1a689c !important;
  border-radius: 4px 0 0 4px;
}

.btn-dl {
  background: linear-gradient(#fff, #e6e6e6);
  border-left: 0 !important;
  border-radius: 0 4px 4px 0;
  box-shadow: 0 1px 2px rgba(0, 0, 0, 0.1);
}

/* table */
.data-table {
  width: 1878px;
  table-layout: fixed;
  border-collapse: separate;
  border-spacing: 0;
  border: 1px solid var(--line);
  border-radius: 4px;
}

.c-id { width: 151px; }
.c-name { width: 253px; }
.c-map { width: 62px; }
.c-lat { width: 151px; }
.c-lon { width: 151px; }
.c-region { width: 687px; }
.c-family { width: 185px; }
.c-glotto { width: 117px; }
.c-ethno { width: 119px; }

th,
td {
  padding: 5px 5px 3px;
  border-left: 1px solid var(--line);
  border-top: 1px solid var(--line);
  text-align: left;
  vertical-align: top;
}

th:first-child,
td:first-child {
  border-left: 0;
}

.head-row th {
  height: 30px;
  padding: 5px 7px 3px 9px;
  border-top: 0;
}

.filter-row th {
  height: 41px;
  padding: 5px 9px;
}

.th-in {
  display: flex;
  justify-content: space-between;
  align-items: flex-start;
  font-weight: bold;
}

.sort {
  margin: 3px 0 0;
}

.sort-up {
  margin-top: 4px;
  border-bottom: 7px solid #8a8ae0;
  border-left: 4px solid transparent;
  border-right: 4px solid transparent;
}

.filter-row input,
.filter-row select {
  display: block;
  height: 30px;
  font: 14px "Liberation Sans", Arial, sans-serif;
  color: #555;
  background: #fff;
  border: 1px solid #ccc;
  border-radius: 4px;
}

.filter-row input {
  width: 104px;
  padding: 4px 6px;
  box-shadow: inset 0 1px 1px rgba(0, 0, 0, 0.075);
}

.filter-row input::placeholder {
  color: #999;
}

.filter-row select {
  width: 90px;
  padding: 4px 6px;
}

tbody td {
  height: 39px;
  line-height: 18px;
  white-space: nowrap;
}

tbody tr:nth-child(odd) td {
  background: #f9f9f9;
}

tbody tr:nth-child(odd) td.sorted {
  background: #f1f1f1;
}

tbody tr:nth-child(even) td.sorted {
  background: #fafafa;
}

.num {
  text-align: right;
}

.btn-globe {
  display: flex;
  align-items: center;
  justify-content: center;
  width: 40px;
  height: 30px;
  padding: 0;
  background: linear-gradient(#fff, #e6e6e6);
  border: 1px solid #ccc;
  border-bottom-color: #b3b3b3;
  border-radius: 4px;
}

.btn-globe svg {
  margin-bottom: 2px;
}

.fam {
  display: flex;
  gap: 5px;
}

.fam svg {
  margin-top: 1px;
}

.fam-tri {
  fill: #dd0000;
  stroke: #777;
  stroke-width: 0.8;
}

.ext {
  margin: 0 4px 0 1px;
  vertical-align: -2px;
}
```
